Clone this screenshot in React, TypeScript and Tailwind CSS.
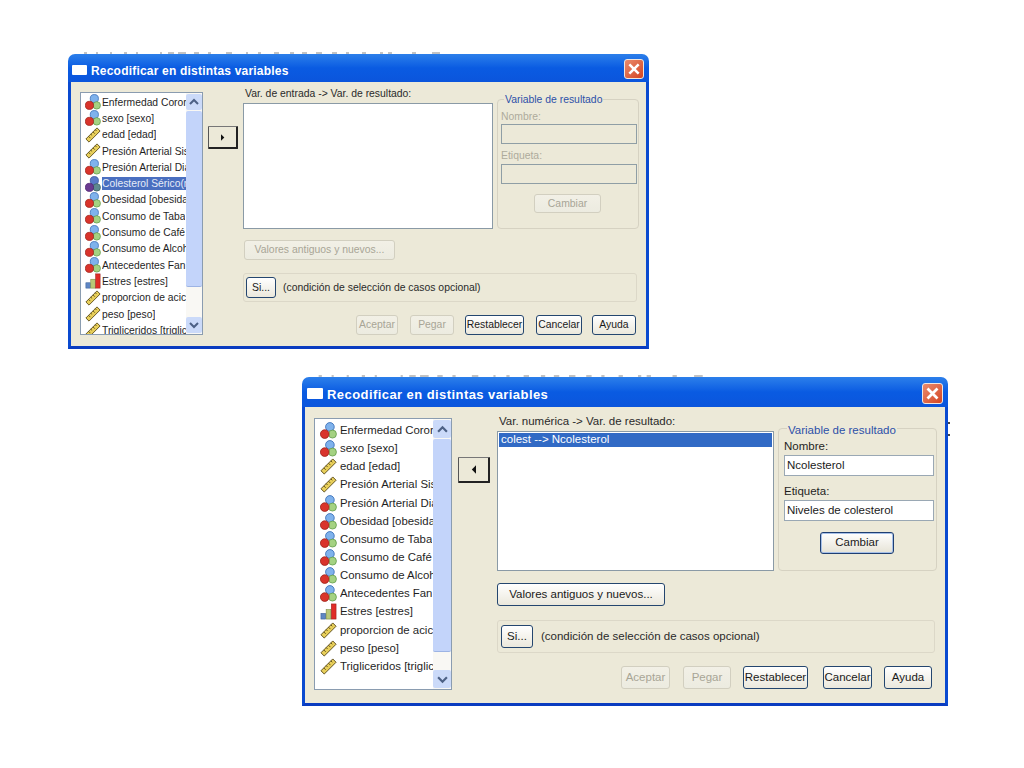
import React from "react";

type Kind = "nom" | "rule" | "ord";

const Icon = ({ kind, cls, dim }: { kind: Kind; cls: string; dim?: boolean }) => {
  if (kind === "nom")
    return (
      <svg viewBox="0 0 18 18" className={cls}>
        <circle cx="10.5" cy="5.2" r="4.6" fill={dim ? "#5a7ac8" : "#7fb2ec"} stroke={dim ? "#2a4a98" : "#2b62b0"} strokeWidth="0.8" />
        <circle cx="13.2" cy="12.8" r="4.2" fill={dim ? "#5f8a90" : "#a4d282"} stroke={dim ? "#3a6060" : "#5e9a48"} strokeWidth="0.8" />
        <circle cx="5" cy="12.8" r="4.6" fill={dim ? "#6a3a90" : "#d9342c"} stroke={dim ? "#4a2070" : "#982018"} strokeWidth="0.8" />
      </svg>
    );
  if (kind === "rule")
    return (
      <svg viewBox="0 0 18 18" className={cls}>
        <polygon points="1,13.5 13.5,1 17,4.5 4.5,17" fill="#e8cf5a" stroke="#5a4a18" strokeWidth="1" />
        <path d="M4 10.5l2 2M6.5 8l1.5 1.5M9 5.5l2 2M11.5 3l1.5 1.5" stroke="#5a4a18" strokeWidth="1" fill="none" />
      </svg>
    );
  return (
    <svg viewBox="0 0 18 18" className={cls}>
      <rect x="1" y="11" width="5" height="6" fill="#5f86c4" stroke="#345c96" strokeWidth="0.6" />
      <rect x="6.5" y="7" width="5" height="10" fill="#b9c878" stroke="#78883c" strokeWidth="0.6" />
      <rect x="12" y="1" width="5" height="16" fill="#e02c28" stroke="#981c18" strokeWidth="0.6" />
    </svg>
  );
};

const Chevron = ({ up, cls }: { up?: boolean; cls: string }) => (
  <svg viewBox="0 0 10 8" className={cls}>
    <path d={up ? "M1 6l4-4 4 4" : "M1 2l4 4 4-4"} fill="none" stroke="#4d6185" strokeWidth="2" />
  </svg>
);

const Triangle = ({ left, cls }: { left?: boolean; cls: string }) => (
  <svg viewBox="0 0 6 10" className={cls}>
    <polygon points={left ? "6,0 6,10 1,5" : "0,0 0,10 5,5"} fill="#111" />
  </svg>
);

const XPButton = ({ label, cls, off, focus }: { label: string; cls: string; off?: boolean; focus?: boolean }) => (
  <div
    className={`flex shrink-0 items-center justify-center whitespace-nowrap rounded-[3px] border bg-gradient-to-b ${
      off
        ? "border-[#d2cfc0] from-[#f2f0e6] to-[#ecebe0] text-[#a8a596]"
        : focus
          ? "border-[#1f3f72] from-white to-[#e6e3d6] text-[#1a1a1a] shadow-[inset_0_0_0_1px_#a6c0e8]"
          : "border-[#24466f] from-white to-[#ebe8dc] text-[#1a1a1a]"
    } ${cls}`}
  >
    {label}
  </div>
);

const Field = ({ value, cls, off }: { value?: string; cls: string; off?: boolean }) => (
  <div className={`flex items-center border ${off ? "border-[#8f9ea5] bg-[#ece9d8]" : "border-[#9aa8b4] bg-white text-[#1a1a1a]"} ${cls}`}>
    {value}
  </div>
);

type Row = { kind: Kind; text: string; selected?: boolean };

const rows1: Row[] = [
  { kind: "nom", text: "Enfermedad Coror" },
  { kind: "nom", text: "sexo [sexo]" },
  { kind: "rule", text: "edad [edad]" },
  { kind: "rule", text: "Presión Arterial Sis" },
  { kind: "nom", text: "Presión Arterial Dia" },
  { kind: "nom", text: "Colesterol Sérico(m", selected: true },
  { kind: "nom", text: "Obesidad [obesida" },
  { kind: "nom", text: "Consumo de Taba" },
  { kind: "nom", text: "Consumo de Café" },
  { kind: "nom", text: "Consumo de Alcoh" },
  { kind: "nom", text: "Antecedentes Fan" },
  { kind: "ord", text: "Estres [estres]" },
  { kind: "rule", text: "proporcion de acic" },
  { kind: "rule", text: "peso [peso]" },
  { kind: "rule", text: "Trigliceridos [triglic" },
];

const rows2: Row[] = rows1.filter((r) => !r.selected);

const VarList = ({
  rows, listCls, colCls, rowCls, iconCls, textCls, barCls, upCls, thumbCls, downCls, chevCls,
}: {
  rows: Row[]; listCls: string; colCls: string; rowCls: string; iconCls: string; textCls: string; barCls: string;
  upCls: string; thumbCls: string; downCls: string; chevCls: string;
}) => (
  <div className={`flex shrink-0 border border-[#8a9cb0] bg-white ${listCls}`}>
    <div className={`min-w-0 flex-1 overflow-hidden ${colCls}`}>
      {rows.map((r) => (
        <div key={r.text} className={`flex items-center ${rowCls}`}>
          <Icon kind={r.kind} cls={`shrink-0 ${iconCls}`} dim={r.selected} />
          <span className={`overflow-hidden whitespace-nowrap ${textCls} ${r.selected ? "flex-1 bg-[#4a6fc0] text-[#e6ecf8]" : "text-[#1f1f1f]"}`}>
            {r.text}
          </span>
        </div>
      ))}
    </div>
    <div className={`flex shrink-0 flex-col bg-[#f9f8f4] ${barCls}`}>
      <div className={`flex shrink-0 items-center justify-center rounded-[2px] bg-[#cbdaf9] ${upCls}`}>
        <Chevron up cls={chevCls} />
      </div>
      <div className={`mt-px shrink-0 rounded-[2px] border-b border-[#9db4e4] bg-[#c3d4fa] ${thumbCls}`} />
      <div className="min-h-0 flex-1" />
      <div className={`flex shrink-0 items-center justify-center rounded-[2px] bg-[#cbdaf9] ${downCls}`}>
        <Chevron cls={chevCls} />
      </div>
    </div>
  </div>
);

const TitleBar = ({ cls, iconCls, textCls, closeCls, xCls }: { cls: string; iconCls: string; textCls: string; closeCls: string; xCls: string }) => (
  <div className={`flex items-center rounded-t-[7px] bg-gradient-to-b from-[#2c7fea] via-[#0a5be2] to-[#0b55dc] ${cls}`}>
    <div className={`shrink-0 rounded-[1px] bg-white ${iconCls}`} />
    <span className={`whitespace-nowrap font-bold text-white ${textCls}`}>
      Recodificar en distintas variables
    </span>
    <div className={`ml-auto flex items-center justify-center rounded-[3px] border border-[#f0e6e0] bg-gradient-to-br from-[#e98a6c] to-[#d4431f] ${closeCls}`}>
      <svg viewBox="0 0 12 12" className={xCls}>
        <path d="M2 2l8 8M10 2l-8 8" stroke="#fff" strokeWidth="2.2" />
      </svg>
    </div>
  </div>
);

const Ticks = ({ cls }: { cls: string }) => (
  <svg viewBox="0 0 380 2" preserveAspectRatio="none" className={cls}>
    <path
      d="M8 1h3M20 1h2M34 1h2M48 1h3M60 1h2M84 1h2M92 1h6M102 1h8M118 1h5M132 1h3M150 1h6M170 1h2M182 1h3M198 1h5M214 1h4M226 1h5M240 1h6M256 1h5M270 1h3M286 1h4M304 1h3M312 1h4M336 1h4M356 1h8"
      stroke="#888"
      strokeWidth="1"
    />
  </svg>
);

export default function App() {
  return (
    <div className="relative h-[768px] w-[1024px] overflow-hidden bg-white" style={{ fontFamily: '"Liberation Sans", Arial, sans-serif' }}>
      {/* upper dialog */}
      <Ticks cls="absolute left-[76px] top-[52px] h-[2px] w-[380px]" />
      <div className="absolute left-[68px] top-[54px] flex h-[295px] w-[581px] flex-col">
        <TitleBar
          cls="h-[28px] shrink-0 pl-[4px] pr-[5px]"
          iconCls="mr-[4px] mt-[3px] h-[10px] w-[15px]"
          textCls="mt-[6px] text-[12px] tracking-[0.2px]"
          closeCls="h-[20px] w-[20px] mt-[2px]"
          xCls="h-[14px] w-[14px]"
        />
        <div className="flex min-h-0 flex-1 items-start border-x-[3px] border-b-[3px] border-x-[#0a4ad0] border-b-[#0a3cc0] bg-[#ece9d8] pl-[9px] pt-[5px] text-[10.4px]">
          <VarList
            rows={rows1}
            listCls="mt-[5px] h-[243px] w-[123px] overflow-hidden"
            colCls="pt-px"
            rowCls="h-[16.3px] pl-[4px]"
            iconCls="mr-px h-[16px] w-[16px]"
            textCls="text-[10.3px] leading-[13px]"
            barCls="w-[16px] py-px"
            upCls="h-[16px]"
            thumbCls="h-[176px]"
            downCls="h-[16px]"
            chevCls="h-[8px] w-[10px]"
          />
          <div className="mt-[39px] w-[40px] shrink-0 pl-[5px]">
            <div className="flex h-[23px] w-[30px] items-center justify-center rounded-[1px] border border-b-2 border-r-2 border-[#222] border-l-[#555] border-t-[#777] bg-[#ece9d8]">
              <Triangle cls="h-[7px] w-[4px]" />
            </div>
          </div>
          <div className="w-[396px] shrink-0">
            <div className="flex gap-[4px]">
              <div className="w-[250px] shrink-0">
                <div className="h-[16px] pl-[2px] leading-[13px] text-[#2a2a2a]">Var. de entrada -&gt; Var. de resultado:</div>
                <div className="h-[126px] border border-[#8a9aa6] bg-white" />
              </div>
              <div className="relative mt-[12px] h-[130px] w-[142px] shrink-0 rounded-[4px] border border-[#d6d2c2] pl-[3px]">
                <div className="absolute -top-[6px] left-[6px] bg-[#ece9d8] px-px leading-[12px] text-[#2c50a8]">Variable de resultado</div>
                <div className="flex h-[24px] items-end pb-[1px] leading-[12px] text-[#aeab9c]">Nombre:</div>
                <Field cls="h-[20px] w-[136px]" off />
                <div className="flex h-[20px] items-end pb-[2px] leading-[12px] text-[#aeab9c]">Etiqueta:</div>
                <Field cls="h-[20px] w-[136px]" off />
                <XPButton label="Cambiar" cls="ml-[33px] mt-[10px] h-[19px] w-[67px]" off />
              </div>
            </div>
            <XPButton label="Valores antiguos y nuevos..." cls="ml-px mt-[11px] h-[20px] w-[151px]" off />
            <div className="mt-[13px] flex h-[29px] w-[394px] items-center rounded-[3px] border border-[#dcd8c8] pl-[2px]">
              <XPButton label="Si..." cls="h-[21px] w-[30px]" />
              <span className="ml-[7px] whitespace-nowrap text-[#2a2a2a]">(condición de selección de casos opcional)</span>
            </div>
            <div className="ml-[113px] mt-[13px] flex">
              <XPButton label="Aceptar" cls="h-[20px] w-[42px]" off />
              <XPButton label="Pegar" cls="ml-[12px] h-[20px] w-[44px]" off />
              <XPButton label="Restablecer" cls="ml-[11px] h-[20px] w-[59px]" />
              <XPButton label="Cancelar" cls="ml-[12px] h-[20px] w-[46px]" />
              <XPButton label="Ayuda" cls="ml-[10px] h-[20px] w-[44px]" />
            </div>
          </div>
        </div>
      </div>

      {/* lower dialog */}
      <Ticks cls="absolute left-[310px] top-[375px] h-[2px] w-[410px]" />
      <div className="absolute left-[948px] top-[422px] h-[14px] w-[2px] border-y-2 border-[#444]" />
      <div className="absolute left-[302px] top-[377px] flex h-[329px] w-[646px] flex-col">
        <TitleBar
          cls="h-[30px] shrink-0 pl-[5px] pr-[5px]"
          iconCls="mr-[4px] mt-[3px] h-[11px] w-[16px]"
          textCls="mt-[6px] text-[13px] tracking-[0.43px]"
          closeCls="h-[21px] w-[21px] mt-[3px]"
          xCls="h-[15px] w-[15px]"
        />
        <div className="flex min-h-0 flex-1 items-start border-x-[3px] border-b-[3px] border-x-[#0a4ad0] border-b-[#0a3cc0] bg-[#ece9d8] pl-[9px] pt-[7px] text-[11.5px]">
          <VarList
            rows={rows2}
            listCls="mt-[4px] h-[272px] w-[138px] overflow-hidden"
            colCls="pt-[2.5px]"
            rowCls="h-[18.15px] pl-[5px]"
            iconCls="mr-[3px] h-[17px] w-[17px]"
            textCls="text-[11.4px] leading-[15px]"
            barCls="w-[18px] py-px"
            upCls="h-[18px]"
            thumbCls="h-[213px]"
            downCls="h-[18px]"
            chevCls="h-[9px] w-[11px]"
          />
          <div className="mt-[43px] w-[45px] shrink-0 pl-[6px]">
            <div className="flex h-[26px] w-[32px] items-center justify-center rounded-[1px] border border-b-2 border-r-2 border-[#222] border-l-[#555] border-t-[#777] bg-[#ece9d8]">
              <Triangle left cls="h-[9px] w-[5px]" />
            </div>
          </div>
          <div className="w-[440px] shrink-0">
            <div className="flex gap-[4px]">
              <div className="w-[277px] shrink-0">
                <div className="h-[17px] pl-[2px] leading-[14px] text-[#2a2a2a]">Var. numérica -&gt; Var. de resultado:</div>
                <div className="h-[140px] border border-[#8a9aa6] bg-white p-px">
                  <div className="flex h-[14px] items-center bg-[#316ac5] pl-[2px] text-white">colest --&gt; Ncolesterol</div>
                </div>
              </div>
              <div className="relative mt-[14px] h-[143px] w-[159px] shrink-0 rounded-[4px] border border-[#d6d2c2] pl-[5px]">
                <div className="absolute -top-[6px] left-[8px] bg-[#ece9d8] px-px leading-[14px] text-[#2c50a8]">Variable de resultado</div>
                <div className="flex h-[26px] items-end pb-[2px] leading-[14px] text-[#1f1f1f]">Nombre:</div>
                <Field value="Ncolesterol" cls="h-[21px] w-[150px] pl-[2px]" />
                <div className="flex h-[24px] items-end pb-[2px] leading-[14px] text-[#1f1f1f]">Etiqueta:</div>
                <Field value="Niveles de colesterol" cls="h-[21px] w-[150px] pl-[2px]" />
                <XPButton label="Cambiar" cls="ml-[36px] mt-[11px] h-[22px] w-[74px]" focus />
              </div>
            </div>
            <XPButton label="Valores antiguos y nuevos..." cls="mt-[12px] h-[23px] w-[168px]" />
            <div className="mt-[14px] flex h-[33px] w-[438px] items-center rounded-[3px] border border-[#dcd8c8] pl-[3px]">
              <XPButton label="Si..." cls="h-[23px] w-[32px]" />
              <span className="ml-[8px] whitespace-nowrap text-[#2a2a2a]">(condición de selección de casos opcional)</span>
            </div>
            <div className="ml-[124px] mt-[13px] flex">
              <XPButton label="Aceptar" cls="h-[23px] w-[49px]" off />
              <XPButton label="Pegar" cls="ml-[13px] h-[23px] w-[48px]" off />
              <XPButton label="Restablecer" cls="ml-[12px] h-[23px] w-[65px]" />
              <XPButton label="Cancelar" cls="ml-[15px] h-[23px] w-[49px]" />
              <XPButton label="Ayuda" cls="ml-[12px] h-[23px] w-[48px]" />
            </div>
          </div>
        </div>
      </div>
    </div>
  );
}
